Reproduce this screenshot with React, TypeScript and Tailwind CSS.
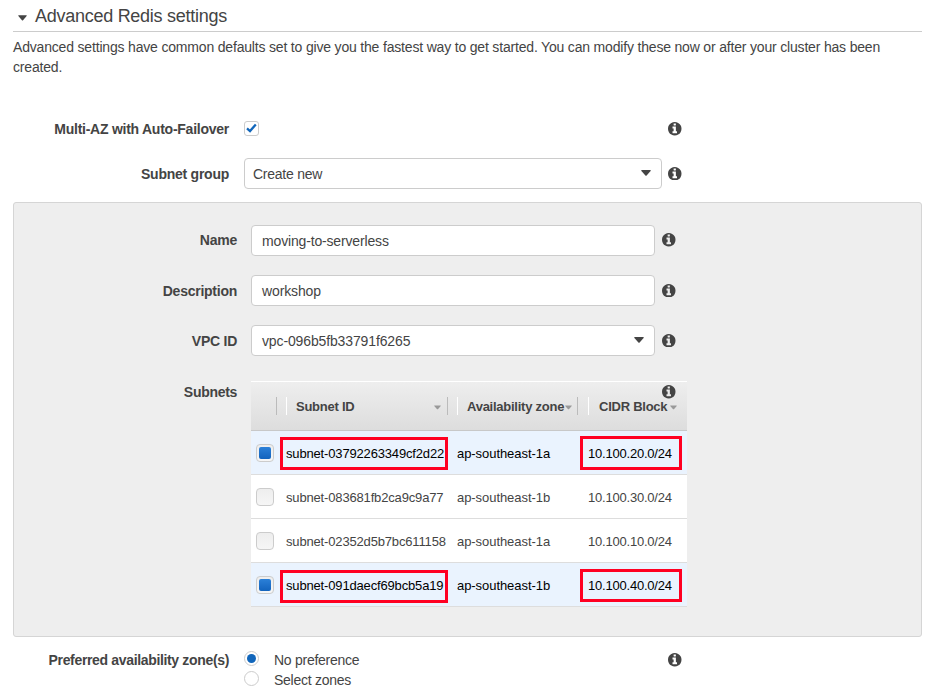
import type { ReactNode } from "react";

function Caret({ className = "" }: { className?: string }) {
  return (
    <svg viewBox="0 0 10 6" className={`shrink-0 ${className}`}>
      <path d="M0.6 0H9.4Q10 0.3 9.6 0.9L5.6 5.4Q5 5.9 4.4 5.4L0.4 0.9Q0 0.3 0.6 0Z" fill="currentColor" />
    </svg>
  );
}

function Info({ className = "" }: { className?: string }) {
  return (
    <svg viewBox="0 128 1536 1536" className={`size-[13.5px] shrink-0 text-[#444] ${className}`}>
      <path
        fill="currentColor"
        d="M1024 1376v-160q0-14-9-23t-23-9h-96v-512q0-14-9-23t-23-9h-320q-14 0-23 9t-9 23v160q0 14 9 23t23 9h96v320h-96q-14 0-23 9t-9 23v160q0 14 9 23t23 9h448q14 0 23-9t9-23zm-128-896v-160q0-14-9-23t-23-9h-192q-14 0-23 9t-9 23v160q0 14 9 23t23 9h192q14 0 23-9t9-23zm640 416q0 209-103 385.5t-279.5 279.5-385.5 103-385.5-103-279.5-279.5-103-385.5 103-385.5 279.5-279.5 385.5-103 385.5 103 279.5 279.5 103 385.5z"
      />
    </svg>
  );
}

function Row({ label, children, className = "", labelClass = "" }: { label: string; children: ReactNode; className?: string; labelClass?: string }) {
  return (
    <div className={`flex items-center ${className}`}>
      <div className={`w-[var(--label)] shrink-0 text-right font-bold tracking-[-0.25px] whitespace-nowrap ${labelClass}`}>{label}</div>
      {children}
    </div>
  );
}

function Field({ value, select, className = "" }: { value: string; select?: boolean; className?: string }) {
  return (
    <div className={`flex h-[31px] items-center justify-between rounded-[4px] border border-[#ccc] bg-white pr-2.5 ${className}`}>
      <span>{value}</span>
      {select && <Caret className="mb-0.5 h-[6px] w-[10px]" />}
    </div>
  );
}

function HeadCell({ title, className = "" }: { title: string; className?: string }) {
  return (
    <div className={`flex h-[18px] items-center justify-between border-r border-r-[#bbb] border-l border-l-white pl-[9px] ${className}`}>
      <span className="mt-0.5 whitespace-nowrap">{title}</span>
      <Caret className="mt-0.5 h-[5px] w-[7px] text-[#999]" />
    </div>
  );
}

const subnets = [
  { id: "subnet-03792263349cf2d22", zone: "ap-southeast-1a", cidr: "10.100.20.0/24", on: true },
  { id: "subnet-083681fb2ca9c9a77", zone: "ap-southeast-1b", cidr: "10.100.30.0/24", on: false },
  { id: "subnet-02352d5b7bc611158", zone: "ap-southeast-1a", cidr: "10.100.10.0/24", on: false },
  { id: "subnet-091daecf69bcb5a19", zone: "ap-southeast-1b", cidr: "10.100.40.0/24", on: true },
];

function SubnetTable() {
  return (
    <div className="relative h-[227px] w-[436px] shrink-0 text-[13px]">
      <Info className="absolute top-[4px] left-[411px]" />
      <div className="flex h-[50px] items-center border-t border-b border-t-white border-b-[#c8c8c8] bg-linear-to-b from-[#eee] to-[#ddd] font-bold tracking-[-0.25px]">
        <div className="mr-[9px] h-[18px] w-[26px] border-r border-r-[#bbb]" />
        <HeadCell title="Subnet ID" className="mr-[9px] w-[162px] pr-[6px]" />
        <HeadCell title="Availability zone" className="mr-[10px] w-[121px] pr-[5px]" />
        <div className="flex h-[18px] items-center border-l border-l-white pl-[10px]">
          <span className="mt-0.5 w-[70px] whitespace-nowrap">CIDR Block</span>
          <Caret className="mt-0.5 ml-px h-[5px] w-[7px] text-[#999]" />
        </div>
      </div>
      {subnets.map((s, i) => (
        <div key={s.id} className={`relative flex h-[44px] items-center border-b border-[#ddd] ${s.on ? "bg-[#eaf3fe] text-black" : "bg-white"}`}>
          <div className="ml-[5px] flex size-[18px] items-center justify-center rounded-[4px] border border-[#ccc] bg-linear-to-b from-[#eee] to-[#f6f6f6]">
            {s.on && <div className="size-3 rounded-[2px] bg-linear-to-b from-[#2b80d8] to-[#1263bd]" />}
          </div>
          <span className="mt-[3px] ml-[12px] w-[171px] tracking-[-0.16px] whitespace-nowrap">{s.id}</span>
          <span className="mt-[3px] w-[131px] tracking-[-0.06px] whitespace-nowrap">{s.zone}</span>
          <span className="mt-[3px] tracking-[-0.21px] whitespace-nowrap">{s.cidr}</span>
          {s.on && (
            <>
              <div className={`absolute left-[29px] h-[33px] w-[168px] border-3 border-[#ff0022] ${i === 0 ? "top-[6px]" : "top-[7px]"}`} />
              <div className={`absolute left-[329px] w-[102px] border-3 border-[#ff0022] ${i === 0 ? "top-[5px] h-[34px]" : "top-[6px] h-[33px]"}`} />
            </>
          )}
        </div>
      ))}
    </div>
  );
}

export default function App() {
  return (
    <div className="h-[693px] w-[931px] overflow-hidden bg-white px-[13px] font-['Liberation_Sans',Arial,sans-serif] text-[14px] leading-5 text-[#444]">
      <div className="flex h-[32px] w-[909px] items-center border-b border-[#ccc] pl-[5px] text-[18px] tracking-[-0.27px]">
        <Caret className="mt-1 h-[6px] w-[9px]" />
        <h1 className="mt-px ml-[8px]">Advanced Redis settings</h1>
      </div>
      <p className="mt-[5px] tracking-[-0.18px] whitespace-nowrap">
        Advanced settings have common defaults set to give you the fastest way to get started. You can modify these now or after your cluster has been
        <br />
        created.
      </p>
      <div className="[--label:216px]">
        <Row label="Multi-AZ with Auto-Failover" labelClass="tracking-[-0.2px]" className="mt-[42px] h-5">
          <div className="mb-0.5 ml-[15px] flex size-[15px] items-center justify-center rounded-[3px] border border-[#ccc]">
            <svg viewBox="0 0 11 10" className="h-[10px] w-[11px]">
              <path d="M1 5.4L4 8.1L9.8 1.5" fill="none" stroke="#1166bb" strokeWidth="2.3" />
            </svg>
          </div>
          <Info className="ml-[409px]" />
        </Row>
        <Row label="Subnet group" className="mt-[19px] h-[31px]">
          <Field value="Create new" select className="ml-[15px] w-[418px] pl-[8px] tracking-[-0.25px]" />
          <Info className="ml-[6px]" />
        </Row>
      </div>
      <section className="mt-[13px] h-[435px] w-[909px] rounded-[3px] border border-[#d5d5d5] bg-[#eee] pt-[22px] [--label:223px]">
        <Row label="Name" labelClass="pb-0.5">
          <Field value="moving-to-serverless" className="ml-[14px] w-[404px] pl-[10px] tracking-[-0.16px]" />
          <Info className="mb-px ml-[7px]" />
        </Row>
        <Row label="Description" className="mt-[19px]">
          <Field value="workshop" className="ml-[14px] w-[404px] pl-[10px] tracking-[-0.13px]" />
          <Info className="ml-[7px]" />
        </Row>
        <Row label="VPC ID" className="mt-[19px]">
          <Field value="vpc-096b5fb33791f6265" select className="ml-[14px] w-[404px] pt-px pl-[10px] tracking-[-0.13px]" />
          <Info className="ml-[7px]" />
        </Row>
        <div className="mt-[25px] flex">
          <div className="mr-[14px] w-[var(--label)] pt-px text-right font-bold tracking-[-0.3px]">Subnets</div>
          <SubnetTable />
        </div>
      </section>
      <div className="mt-[13px] flex">
        <div className="w-[216px] text-right font-bold tracking-[-0.34px] whitespace-nowrap">Preferred availability zone(s)</div>
        <div className="ml-[15px] w-[424px]">
          {["No preference", "Select zones"].map((o, i) => (
            <div key={o} className="flex h-5 items-center">
              <span className="mb-[3px] flex size-[15px] items-center justify-center rounded-full border border-[#ccc]">
                {i === 0 && <span className="size-[9px] rounded-full bg-[#1166bb]" />}
              </span>
              <span className="ml-[15px] tracking-[-0.27px]">{o}</span>
            </div>
          ))}
        </div>
        <Info className="mt-[3px]" />
      </div>
    </div>
  );
}
